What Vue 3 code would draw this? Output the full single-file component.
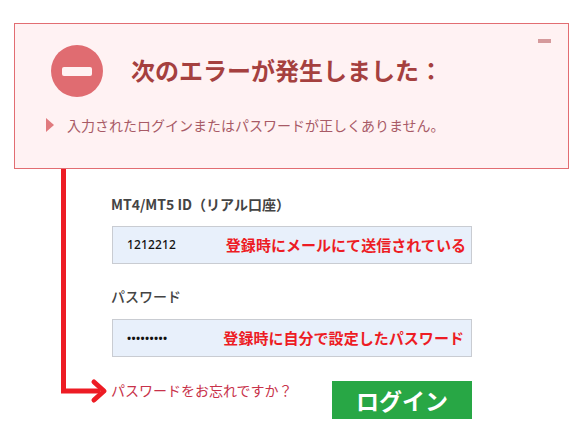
<script setup>
const title = '次のエラーが発生しました：'
const message = '入力されたログインまたはパスワードが正しくありません。'
</script>

<template>
  <div class="page">
    <section class="alert">
      <span class="minimize"></span>
      <div class="alert-head">
        <span class="stop"><span class="stop-bar"></span></span>
        <h1 class="alert-title">{{ title }}</h1>
      </div>
      <div class="alert-msg">
        <span class="tri"></span>
        <span>{{ message }}</span>
      </div>
    </section>

    <form class="form" @submit.prevent>
      <label class="label">MT4/MT5 ID（リアル口座）</label>
      <div class="field field-id">
        <span class="value">1212212</span>
        <span class="note">登録時にメールにて送信されている</span>
      </div>
      <label class="label label-pw">パスワード</label>
      <div class="field field-pw">
        <span class="value dots">•••••••••</span>
        <span class="note">登録時に自分で設定したパスワード</span>
      </div>
      <div class="actions">
        <a class="forgot">パスワードをお忘れですか？</a>
        <button class="login" type="button">ログイン</button>
      </div>
    </form>

    <svg class="arrow" width="581" height="429" viewBox="0 0 581 429">
      <path d="M63.5 169V391H100" fill="none" stroke="#ed1c24" stroke-width="5" />
      <path d="M94 382L104 391L94 400" fill="none" stroke="#ed1c24" stroke-width="5" stroke-linecap="round" stroke-linejoin="round" />
    </svg>
  </div>
</template>

<style scoped>
.page {
  position: relative;
  width: 581px;
  height: 429px;
  overflow: hidden;
  background: #fff;
  padding: 23px 0 0 14px;
  box-sizing: border-box;
  font-family: "Noto Sans CJK JP", "Noto Sans", sans-serif;
}
.alert {
  position: relative;
  box-sizing: border-box;
  width: 555px;
  height: 146px;
  background: #fff2f3;
  border: 1px solid #e26d72;
  padding: 21px 0 0 31px;
}
.minimize {
  position: absolute;
  top: 15px;
  right: 17px;
  width: 13px;
  height: 4px;
  background: #d59a9c;
}
.alert-head {
  display: flex;
  align-items: center;
  gap: 28px;
  padding-left: 5px;
}
.stop {
  width: 52px;
  height: 52px;
  border-radius: 50%;
  background: #e06c71;
  display: flex;
  align-items: center;
  justify-content: center;
  flex: none;
}
.stop-bar {
  width: 30px;
  height: 9px;
  border-radius: 2px;
  background: #fff2f3;
}
.alert-title {
  margin: 0;
  font-size: 24px;
  line-height: 32px;
  font-weight: 700;
  color: #a5403f;
  position: relative;
  top: -1px;
}
.alert-msg {
  display: flex;
  align-items: center;
  gap: 13px;
  margin-top: 18px;
  font-size: 14px;
  line-height: 20px;
  color: #a85a66;
}
.tri {
  width: 0;
  height: 0;
  border-left: 8px solid #e07a7e;
  border-top: 7px solid transparent;
  border-bottom: 7px solid transparent;
  flex: none;
}
.form {
  width: 360px;
  margin: 25px 0 0 98px;
}
.label {
  display: block;
  font-size: 14px;
  line-height: 20px;
  font-weight: 700;
  color: #444;
  margin-left: -1px;
}
.label-pw {
  font-weight: 500;
  margin-top: 22px;
}
.field {
  box-sizing: border-box;
  height: 38px;
  margin-top: 12px;
  background: #e8f0fb;
  border: 1px solid #c9ccd2;
  display: flex;
  align-items: center;
  justify-content: space-between;
  padding: 0 5px 2px 14px;
}
.field-pw {
  margin-top: 13px;
  padding-right: 7px;
}
.value {
  font-size: 12px;
  color: #111;
  font-weight: 500;
  letter-spacing: 0.15px;
  font-family: "Noto Sans", sans-serif;
}
.dots {
  font-size: 11px;
  letter-spacing: 0.35px;
  font-weight: 700;
}
.note {
  font-size: 15px;
  font-weight: 700;
  letter-spacing: 0.04px;
  color: #ed1c24;
  white-space: nowrap;
}
.actions {
  display: flex;
  justify-content: space-between;
  align-items: flex-start;
  margin-top: 24px;
}
.forgot {
  font-size: 14px;
  line-height: 20px;
  color: #c8324a;
  margin: -1px 0 0 -1px;
}
.login {
  width: 140px;
  height: 38px;
  border: 0;
  padding: 0;
  background: #28a745;
  color: #fff;
  font-family: inherit;
  font-size: 23px;
  font-weight: 700;
  line-height: 36px;
}
.arrow {
  position: absolute;
  left: 0;
  top: 0;
  pointer-events: none;
}
</style>
